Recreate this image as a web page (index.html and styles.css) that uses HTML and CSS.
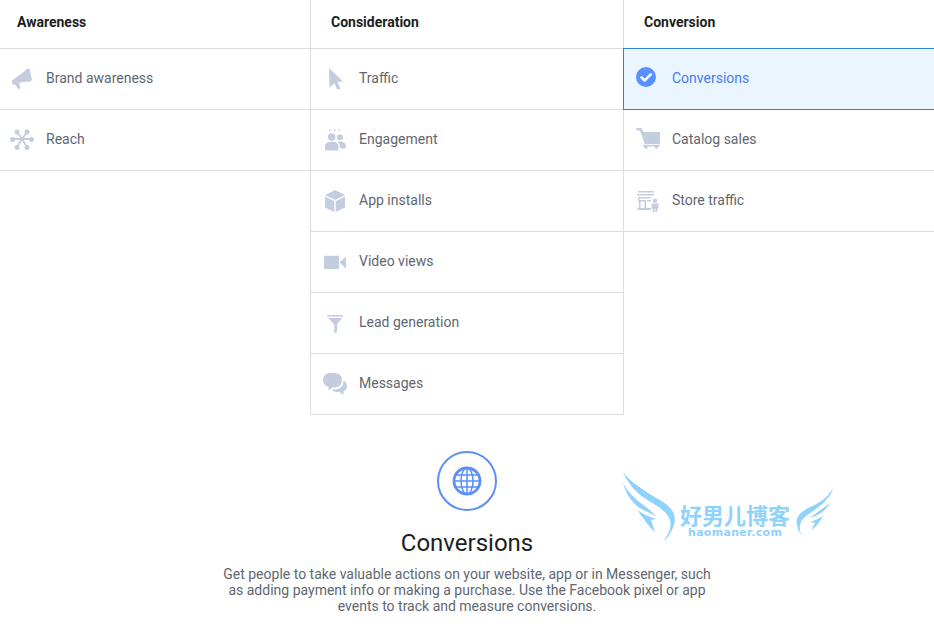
FILE: index.html
```html
<!DOCTYPE html>
<html lang="en">
<head>
<meta charset="utf-8">
<title>Campaign objective</title>
<link rel="stylesheet" href="styles.css">
</head>
<body>
<div class="page">
  <div class="grid">
    <section class="col col-a">
      <h2 class="head">Awareness</h2>
      <div class="item"><span class="ico"><svg viewBox="0 0 24 24" width="24" height="24"><path d="M2 14.500 15 5 17 2.500 19.500 2.500 22 14 20.500 15.500 12.500 16 9 17 10.500 22 8 23.300 5.500 18.500 3.500 18.800 2 17z"/></svg></span>Brand awareness</div>
      <div class="item"><span class="ico"><svg viewBox="0 0 24 24" width="24" height="24"><path class="spokes" d="M12 12 7 5M12 12l5-7M12 12H2M12 12h10M12 12l-5 8M12 12l5 8"/><circle cx="7" cy="5" r="2.500"/><circle cx="17" cy="5" r="2.500"/><circle cx="2.500" cy="12.500" r="2.500"/><circle cx="21.500" cy="12.500" r="2.500"/><circle cx="7" cy="20.500" r="2.500"/><circle cx="17" cy="20.500" r="2.500"/></svg></span>Reach</div>
    </section>
    <section class="col col-b">
      <h2 class="head">Consideration</h2>
      <div class="item"><span class="ico"><svg viewBox="0 0 24 24" width="24" height="24"><path d="M6 2 20 15.500 14.500 16 17.500 22.500 14.500 24 11.500 17.500 6.500 21.500z"/></svg></span>Traffic</div>
      <div class="item"><span class="ico"><svg viewBox="0 0 24 24" width="24" height="24"><circle cx="8.700" cy="10" r="3.700"/><circle cx="17" cy="10.300" r="3"/><path d="M2 23v-3.500C2 16 5 14.800 8.700 14.800S15.500 16 15.500 19.500V23.500H4C3 23.500 2 23.500 2 23zM17 14.500c3.500 0 6 1.500 6 4.500 0 1.500-.5 2.500-1.500 2.500H17c0-2.800-.5-5-2.500-6.500z"/><rect x="6" y="2.300" width="1.500" height="1.500"/><rect x="11" y="2.300" width="1.500" height="1.500"/><rect x="15.500" y="2.300" width="1.500" height="1.500"/></svg></span>Engagement</div>
      <div class="item"><span class="ico"><svg viewBox="0 0 24 24" width="24" height="24"><path d="M12 2 22 7 12 12 2 7zM2 8.500l9.300 4.700V24L2 19.500zM22 8.500l-9.300 4.700V24l9.300-4.500z"/></svg></span>App installs</div>
      <div class="item"><span class="ico"><svg viewBox="0 0 24 24" width="24" height="24"><path d="M1 6.700h15V20H1zM16.500 13.400 23 7.500v12z"/></svg></span>Video views</div>
      <div class="item"><span class="ico"><svg viewBox="0 0 24 24" width="24" height="24"><path d="M4 5h16v1.500H4zM5 8h14l-5 6.500V22l-2.800 1.500v-9z"/></svg></span>Lead generation</div>
      <div class="item"><span class="ico"><svg viewBox="0 0 24 24" width="24" height="24"><path d="M0 9c0-4 3-7 7-7h5c4 0 7 3 7 7 0 4.500-3 7.500-7 7.500H9.500L5.500 19.500V16C2 15 0 12.500 0 9z"/><path d="M20.500 9.500c2.200 1 3.500 3 3.500 5.500 0 2.800-1.500 4.800-3.500 5.500V24l-4-3h-3c-2 0-3.700-.8-4.700-2.500H12c5 0 8.800-3.500 8.500-9z"/></svg></span>Messages</div>
    </section>
    <section class="col col-c">
      <h2 class="head">Conversion</h2>
      <div class="item is-active"><span class="ico"><svg viewBox="0 0 24 24" width="24" height="24"><circle class="tick-bg" cx="10" cy="11" r="10"/><path class="tick" d="M5.500 11.300 8.700 14.500 14.700 8.300"/></svg></span>Conversions</div>
      <div class="item"><span class="ico"><svg viewBox="0 0 24 24" width="24" height="24"><path d="M0 1h5.500L7.500 5H24v12H8.800L4 3.500H0.700z"/><rect x="7" y="17.800" width="17" height="1.700"/><circle cx="10" cy="20" r="1.800"/><circle cx="20.500" cy="20" r="1.800"/></svg></span>Catalog sales</div>
      <div class="item"><span class="ico"><svg viewBox="0 0 24 24" width="24" height="24"><path d="M2 3h16v1.500H2zM1 6h17v1.500H1zM2 9h13v1.500H3.500V12H10v8H15v2H1.500v-2H3V13.500h1.500V20H8.500v-6.500H2V9zM11 12h4v1.500h-4z"/><circle cx="19" cy="12.800" r="2.200"/><path d="M15.500 15.500h7v5h-1.200V24h-1.800v-3.500h-1V24h-1.800v-3.500h-1.200z"/></svg></span>Store traffic</div>
    </section>
  </div>
  <div class="detail">
    <div class="badge"><svg viewBox="0 0 32 32" width="32" height="32"><circle class="globe-rim" cx="16" cy="16" r="13"/><ellipse cx="16" cy="16" rx="6" ry="13"/><path d="M16 3v26M3 16h26M5 10h22M5 22h22"/></svg></div>
    <h1 class="title">Conversions</h1>
    <p class="desc">Get people to take valuable actions on your website, app or in Messenger, such as adding payment info or making a purchase. Use the Facebook pixel or app events to track and measure conversions.</p>
  </div>
  <div class="mark">
    <svg class="wing-l" viewBox="0 0 56 72" width="56" height="72"><path d="M1 2C8 12 24 22 38 30 50 37 55 45 52 54 50 62 46 68 41 71 46 66 50 58 48 50 45 41 35 36 27 31 15 24 6 14 1 2z"/><path d="M1 13C6 22 13 29 20 34 26 38 31 43 35 47 29 43 24 42 18 38 10 33 4 24 1 13z"/><path d="M15 40C21 44 27 47 34 49L29 50 33 62C27 57 22 49 15 40z"/></svg>
    <span class="mark-cn">好男儿博客</span>
    <span class="mark-en">haomaner.com</span>
    <svg class="wing-r" viewBox="0 0 46 55" width="46" height="55"><path d="M43 3C38 12 30 18 20 22 10 27 5 33 7 40 8 45 10 48 12 51 9 46 9 40 12 35 18 28 30 23 36 15 39 12 42 8 43 3z"/><path d="M40 18C34 23 27 27 20 33 27 31 35 27 40 18z"/><path d="M33 31C29 33 24 36 20 37L25 38 21 45C26 42 30 37 33 31z"/></svg>
  </div>
</div>
</body>
</html>
```
FILE: styles.css
```css
* { box-sizing: border-box; }
html, body { margin: 0; padding: 0; background: #fff; }
body { font-family: Roboto, "Noto Sans", sans-serif; color: #606770; overflow: hidden; }
.page { position: relative; width: 934px; height: 642px; overflow: hidden; }
.grid { display: grid; grid-template-columns: 310px 314px 310px; align-items: start; }
.col-b { border-left: 1px solid #dadde1; border-right: 1px solid #dadde1; }
.head {
  margin: 0; height: 49px; padding-left: 20px;
  display: flex; align-items: center; padding-bottom: 4px;
  font-size: 14px; font-weight: 700; color: #1c1e21;
  border-bottom: 1px solid #dadde1;
}
.col-a .head { padding-left: 17px; }
.item {
  height: 61px; display: flex; align-items: center;
  padding-left: 12px; padding-bottom: 2px;
  font-size: 14px; line-height: 16px; color: #606770;
  border-bottom: 1px solid #dadde1;
}
.col-a .item { padding-left: 10px; }
.ico { width: 24px; height: 24px; margin-right: 12px; flex: none; display: block; }
.ico svg { display: block; fill: #c4cde0; }
.ico .spokes { fill: none; stroke: #c4cde0; stroke-width: 1.800; }
.item.is-active {
  position: relative; margin-left: -1px; margin-top: -1px; height: 62px;
  padding-left: 12px;
  color: #4a7cf0; background: #ebf5ff;
  border: 1px solid #2d7fd8; border-right: 0;
}
.tick-bg { fill: #5890ff; }
.ico .tick { fill: none; stroke: #fff; stroke-width: 2.500; stroke-linecap: round; stroke-linejoin: round; }
.detail { display: flex; flex-direction: column; align-items: center; padding-top: 36px; }
.badge {
  width: 60px; height: 60px; border: 2px solid #5b8ff9; border-radius: 50%;
  display: flex; align-items: center; justify-content: center;
}
.badge svg { fill: none; stroke: #5b8ff9; stroke-width: 1.500; display: block; }
.badge .globe-rim { stroke-width: 2.800; }
.title { margin: 16px 0 0; font-size: 24px; line-height: 32px; font-weight: 400; color: #1c1e21; }
.desc { margin: 7px 0 0; width: 500px; text-align: center; font-size: 14px; line-height: 16px; color: #606770; }
.mark { position: absolute; left: 622px; top: 470px; width: 214px; height: 74px; color: #8fd2fb; }
.wing-l { position: absolute; left: 0; top: 0; fill: #8fd2fb; }
.wing-r { position: absolute; left: 168px; top: 15px; fill: #8fd2fb; }
.mark-cn { position: absolute; left: 58px; top: 32px; font-family: "Noto Sans CJK SC", sans-serif; font-weight: 700; font-size: 22px; line-height: 24px; white-space: nowrap; }
.mark-en { position: absolute; left: 66px; top: 57px; font-family: "DejaVu Sans", sans-serif; font-weight: 700; font-size: 11px; line-height: 12px; letter-spacing: .3px; white-space: nowrap; }
```
